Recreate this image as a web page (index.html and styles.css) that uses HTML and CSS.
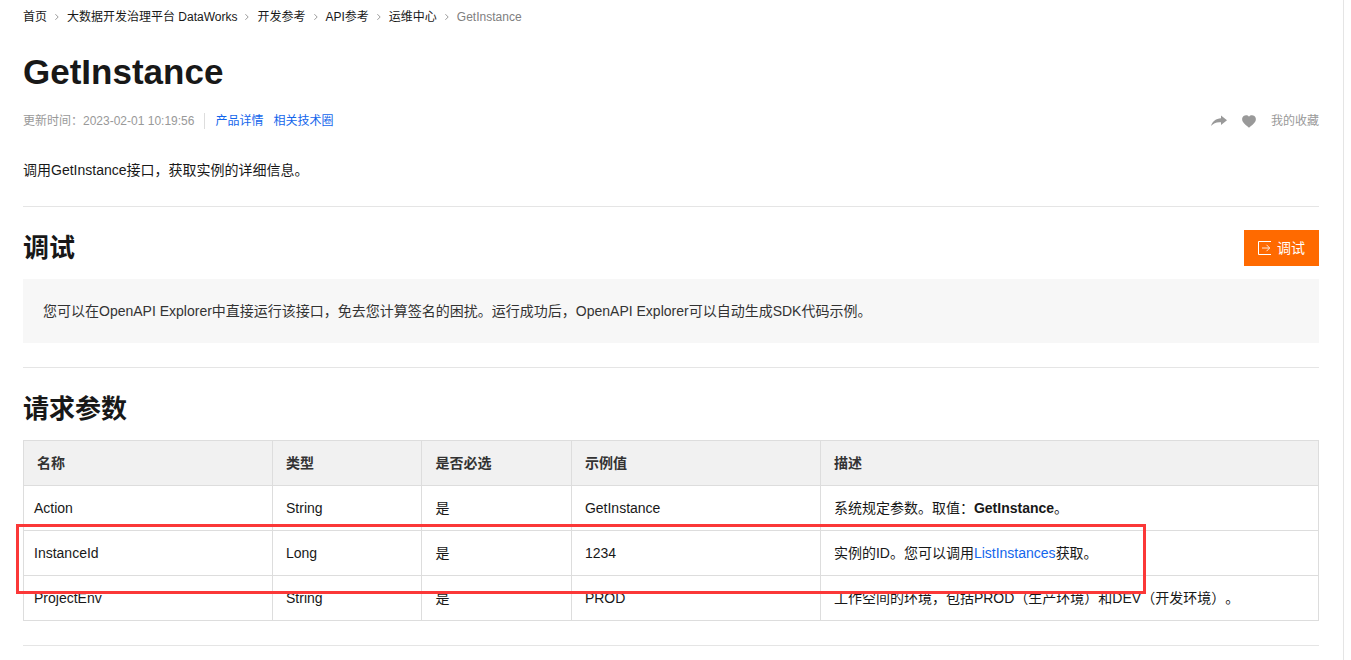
FILE: index.html
```html
<!DOCTYPE html>
<html lang="zh-CN">
<head>
<meta charset="utf-8">
<meta name="viewport" content="width=device-width, initial-scale=1">
<title>GetInstance</title>
<link rel="stylesheet" href="styles.css">
</head>
<body>
<main class="page">
  <nav class="breadcrumb" aria-label="breadcrumb">
    <a href="#">首页</a>
    <svg class="chevron" viewBox="0 0 5 8"><path d="M.5.5 4 4 .5 7.500"/></svg>
    <a href="#">大数据开发治理平台 DataWorks</a>
    <svg class="chevron" viewBox="0 0 5 8"><path d="M.5.5 4 4 .5 7.500"/></svg>
    <a href="#">开发参考</a>
    <svg class="chevron" viewBox="0 0 5 8"><path d="M.5.5 4 4 .5 7.500"/></svg>
    <a href="#">API参考</a>
    <svg class="chevron" viewBox="0 0 5 8"><path d="M.5.5 4 4 .5 7.500"/></svg>
    <a href="#">运维中心</a>
    <svg class="chevron" viewBox="0 0 5 8"><path d="M.5.5 4 4 .5 7.500"/></svg>
    <span class="current">GetInstance</span>
  </nav>

  <h1 class="title">GetInstance</h1>

  <div class="meta">
    <span class="updated">更新时间：2023-02-01 10:19:56</span>
    <div class="meta-links">
      <a class="link" href="#">产品详情</a>
      <a class="link" href="#">相关技术圈</a>
    </div>
    <div class="actions">
      <button class="icon-button" type="button" aria-label="分享">
        <svg width="16" height="12" viewBox="0 0 16 12"><path d="M10 0.500 16 5.300 10 10V7.300C5.500 6.800 2.500 8.200 0 11 1.500 6.200 5 3.500 10 3.200Z"/></svg>
      </button>
      <button class="icon-button" type="button" aria-label="收藏">
        <svg width="14" height="13" viewBox="0 0 14 13"><path d="M7 1.700C8.200 0 10.700-.2 12.400 1 14.200 2.400 14.300 5 13 6.900 11.600 9 9.200 10.600 7 12.700 4.800 10.600 2.400 9 1 6.900-.3 5-.2 2.400 1.600 1 3.300-.2 5.800 0 7 1.700Z"/></svg>
      </button>
      <a class="favorites" href="#">我的收藏</a>
    </div>
  </div>

  <p class="intro">调用GetInstance接口，获取实例的详细信息。</p>

  <section class="section">
    <div class="section-head">
      <h2 class="heading">调试</h2>
      <button class="debug-button" type="button">
        <svg width="13" height="14" viewBox="0 0 13 14"><path d="M13 .5H.5v13H13"/><path class="arrow" d="M4 7h7.500M8.500 3.800 11.700 7 8.500 10.200"/></svg>
        调试
      </button>
    </div>
    <p class="note">您可以在OpenAPI Explorer中直接运行该接口，免去您计算签名的困扰。运行成功后，OpenAPI Explorer可以自动生成SDK代码示例。</p>
  </section>

  <section class="section">
    <div class="section-head">
      <h2 class="heading">请求参数</h2>
    </div>
    <div class="table-wrap">
      <table class="params">
        <colgroup>
          <col class="col-name"><col class="col-type"><col class="col-required"><col class="col-example"><col>
        </colgroup>
        <thead>
          <tr><th>名称</th><th>类型</th><th>是否必选</th><th>示例值</th><th>描述</th></tr>
        </thead>
        <tbody>
          <tr><td>Action</td><td>String</td><td>是</td><td>GetInstance</td><td>系统规定参数。取值：<b>GetInstance</b>。</td></tr>
          <tr><td>InstanceId</td><td>Long</td><td>是</td><td>1234</td><td>实例的ID。您可以调用<a class="link" href="#">ListInstances</a>获取。</td></tr>
          <tr><td>ProjectEnv</td><td>String</td><td>是</td><td>PROD</td><td>工作空间的环境，包括PROD（生产环境）和DEV（开发环境）。</td></tr>
        </tbody>
      </table>
      <div class="highlight"></div>
    </div>
  </section>
  <hr class="rule">
</main>
</body>
</html>
```

FILE: styles.css
```css
* {
  box-sizing: border-box;
}

body {
  margin: 0;
  background: #fff;
  color: #181818;
  font-family: "Liberation Sans", "Noto Sans CJK SC", sans-serif;
  font-size: 14px;
  line-height: 20px;
  text-spacing-trim: space-all;
}

h1, h2, p {
  margin: 0;
}

a {
  color: inherit;
  text-decoration: none;
}

button {
  border: 0;
  padding: 0;
  font: inherit;
  cursor: pointer;
}

.page {
  min-height: 100vh;
  margin-right: 7px;
  padding: 7px 24px 0 23px;
  border-right: 1px solid #e5e5e5;
}

.link {
  color: #1366ec;
}

.breadcrumb {
  display: flex;
  flex-wrap: wrap;
  align-items: center;
  gap: 8px;
  font-size: 12px;
}

.chevron {
  width: 4px;
  height: 8px;
  fill: none;
  stroke: #808080;
}

.current {
  color: #808080;
}

.title {
  margin-top: 23px;
  font-size: 35px;
  line-height: 44px;
}

.meta {
  display: flex;
  align-items: center;
  margin-top: 17px;
  color: #999;
  font-size: 12px;
}

.meta-links {
  display: flex;
  gap: 10px;
  margin-left: 10px;
  padding-left: 10px;
  border-left: 1px solid #ddd;
  line-height: 16px;
}

.actions {
  display: flex;
  align-items: center;
  gap: 15px;
  margin-left: auto;
}

.icon-button {
  display: flex;
  background: none;
}

.icon-button svg {
  fill: #999;
}

.intro {
  margin: 29px 0 26px;
}

.section {
  padding-top: 23px;
  border-top: 1px solid #e5e5e5;
}

.section + .section {
  margin-top: 24px;
}

.section-head {
  display: flex;
  align-items: center;
  justify-content: space-between;
  min-height: 36px;
}

.heading {
  font-size: 26px;
  line-height: 36px;
}

.debug-button {
  display: flex;
  align-items: center;
  gap: 6px;
  height: 36px;
  padding: 0 14px;
  background: #ff6a00;
  color: #fff;
}

.debug-button svg {
  fill: none;
  stroke: #fff;
}

.debug-button .arrow {
  stroke-opacity: 0.85;
}

.note {
  margin-top: 13px;
  padding: 22px 20px;
  background: #f7f7f7;
  color: #333;
}

.table-wrap {
  position: relative;
  margin-top: 13px;
}

.params {
  width: 100%;
  border-collapse: collapse;
  table-layout: fixed;
}

.params th,
.params td {
  height: 45px;
  padding: 12px 13px;
  border: 1px solid #ddd;
  text-align: left;
}

.params th {
  background: #f1f1f1;
  color: #333;
}

.params td:first-child {
  padding-left: 10px;
}

.col-name,
.col-example {
  width: 19.23%;
}

.col-type,
.col-required {
  width: 11.54%;
}

/* Frame drawn over the InstanceId row */
.highlight {
  position: absolute;
  top: 84px;
  left: -7px;
  width: 87.2%;
  height: 70px;
  border: 3px solid #fb3838;
  pointer-events: none;
}

.rule {
  margin: 24px 0 0;
  border: 0;
  border-top: 1px solid #e5e5e5;
}
```
